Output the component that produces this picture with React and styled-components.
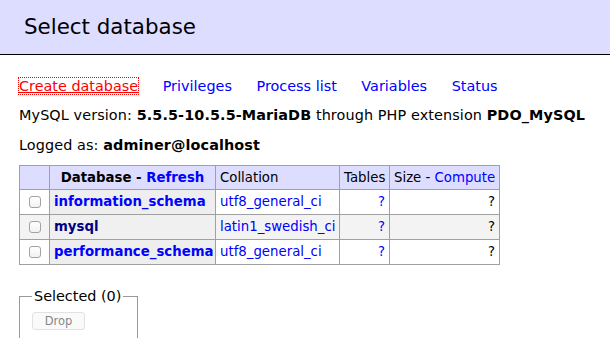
import React from "react";
import styled, { createGlobalStyle } from "styled-components";

const GlobalStyle = createGlobalStyle`
  html, body {
    margin: 0;
    padding: 0;
    background: #fff;
  }
  body {
    font-family: "DejaVu Sans", Verdana, sans-serif;
    font-size: 14.4px;
    line-height: 18px;
    color: #000;
  }
`;

const databases = [
  { name: "information_schema", collation: "utf8_general_ci" },
  { name: "mysql", collation: "latin1_swedish_ci", visited: true, odd: true },
  { name: "performance_schema", collation: "utf8_general_ci" },
];

const links = ["Create database", "Privileges", "Process list", "Variables", "Status"];

const Header = styled.div`
  display: flex;
  align-items: center;
  height: 54px;
  padding-left: 24px;
  background: #ddf;
  border-bottom: 1px solid #000;
`;

const Title = styled.h2`
  margin: 0;
  font-size: 21.4px;
  font-weight: normal;
  line-height: 28px;
`;

const Content = styled.div`
  padding-left: 19px;
`;

const Links = styled.p`
  margin: 22px 0 0;
  white-space: nowrap;
`;

const NavLink = styled.a`
  color: ${(p) => (p.$active ? "red" : "blue")};
  text-decoration: ${(p) => (p.$active ? "underline" : "none")};
  outline: ${(p) => (p.$active ? "1px dotted red" : "none")};
  margin-right: 20px;
  cursor: pointer;
`;

const Info = styled.p`
  margin: ${(p) => p.$top || 11}px 0 0;
  white-space: nowrap;
  letter-spacing: 0.1px;
`;

const Table = styled.table`
  margin-top: 11px;
  border-collapse: collapse;
  table-layout: fixed;
  width: 480px;
  border: 1px solid #a0a0a0;
  font-size: 13.3px;
`;

const HeadCell = styled.th`
  background: #ddf;
  border: 1px solid #a0a0a0;
  padding: 3px 4px 2px;
  font-weight: ${(p) => (p.$bold ? "bold" : "normal")};
  text-align: ${(p) => (p.$center ? "center" : "left")};
  white-space: nowrap;
`;

const Row = styled.tr`
  td {
    background: ${(p) => (p.$odd ? "#f3f3f3" : "#fff")};
  }
  th {
    background: ${(p) => (p.$odd ? "#f0f0f0" : "#eee")};
  }
`;

const Cell = styled.td`
  border: 1px solid #a0a0a0;
  padding: 3px 4px;
  text-align: ${(p) => (p.$right ? "right" : "left")};
  white-space: nowrap;
  overflow: hidden;
`;

const NameCell = styled.th`
  border: 1px solid #a0a0a0;
  padding: 3px 4px;
  text-align: left;
  white-space: nowrap;
`;

const CheckCell = styled.td`
  border: 1px solid #a0a0a0;
  padding: 0;
  text-align: center;
  vertical-align: middle;
`;

const Check = styled.input.attrs({ type: "checkbox" })`
  appearance: none;
  display: block;
  margin: 0 auto;
  width: 12px;
  height: 12px;
  border: 1px solid #a3a3a3;
  border-radius: 3px;
  background: linear-gradient(#fff, #f2f2f2);
  box-sizing: border-box;
`;

const Link = styled.a`
  color: ${(p) => (p.$visited ? "navy" : "blue")};
  font-weight: ${(p) => (p.$bold ? "bold" : "normal")};
  text-decoration: none;
`;

const Fieldset = styled.fieldset`
  display: inline-block;
  margin: 22px 0 0;
  padding: 6px 14px 8px 12px;
  border: 1px solid #999;
  min-width: 0;
`;

const Legend = styled.legend`
  padding: 0 2px;
  font-size: 14.4px;
`;

const DropButton = styled.button`
  display: block;
  width: 53px;
  height: 18px;
  margin-top: 1px;
  padding: 0;
  font-family: "DejaVu Sans", Verdana, sans-serif;
  font-size: 11.5px;
  color: #888;
  background: #fafafa;
  border: 1px solid #e2e2e2;
  border-radius: 3px;
`;

export default function App() {
  return (
    <>
      <GlobalStyle />
      <Header>
        <Title>Select database</Title>
      </Header>
      <Content>
        <Links>
          {links.map((l, i) => (
            <React.Fragment key={l}>
              <NavLink $active={i === 0}>{l}</NavLink>{" "}
            </React.Fragment>
          ))}
        </Links>
        <Info>
          MySQL version: <b>5.5.5-10.5.5-MariaDB</b> through PHP extension <b>PDO_MySQL</b>
        </Info>
        <Info $top={12}>
          Logged as: <b>adminer@localhost</b>
        </Info>
        <Table>
          <colgroup>
            <col style={{ width: 30 }} />
            <col style={{ width: 166 }} />
            <col style={{ width: 124 }} />
            <col style={{ width: 50 }} />
            <col style={{ width: 110 }} />
          </colgroup>
          <thead>
            <tr>
              <HeadCell />
              <HeadCell $bold $center>
                Database - <Link $bold>Refresh</Link>
              </HeadCell>
              <HeadCell>Collation</HeadCell>
              <HeadCell>Tables</HeadCell>
              <HeadCell>
                Size - <Link>Compute</Link>
              </HeadCell>
            </tr>
          </thead>
          <tbody>
            {databases.map((db) => (
              <Row key={db.name} $odd={db.odd}>
                <CheckCell>
                  <Check />
                </CheckCell>
                <NameCell>
                  <Link $bold $visited={db.visited}>{db.name}</Link>
                </NameCell>
                <Cell>
                  <Link>{db.collation}</Link>
                </Cell>
                <Cell $right>
                  <Link>?</Link>
                </Cell>
                <Cell $right>?</Cell>
              </Row>
            ))}
          </tbody>
        </Table>
        <Fieldset>
          <Legend>Selected (0)</Legend>
          <DropButton disabled>Drop</DropButton>
        </Fieldset>
      </Content>
    </>
  );
}
